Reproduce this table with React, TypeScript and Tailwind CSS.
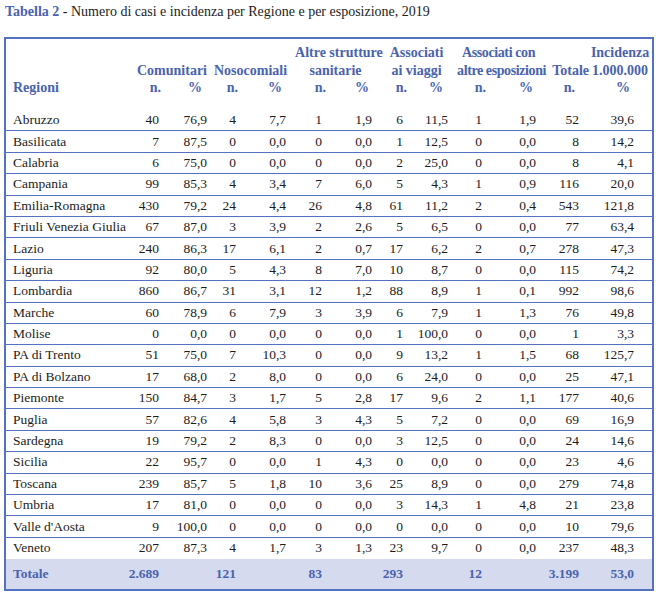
const rows: [string, ...string[]][] = [
  ["Abruzzo", "40", "76,9", "4", "7,7", "1", "1,9", "6", "11,5", "1", "1,9", "52", "39,6"],
  ["Basilicata", "7", "87,5", "0", "0,0", "0", "0,0", "1", "12,5", "0", "0,0", "8", "14,2"],
  ["Calabria", "6", "75,0", "0", "0,0", "0", "0,0", "2", "25,0", "0", "0,0", "8", "4,1"],
  ["Campania", "99", "85,3", "4", "3,4", "7", "6,0", "5", "4,3", "1", "0,9", "116", "20,0"],
  ["Emilia-Romagna", "430", "79,2", "24", "4,4", "26", "4,8", "61", "11,2", "2", "0,4", "543", "121,8"],
  ["Friuli Venezia Giulia", "67", "87,0", "3", "3,9", "2", "2,6", "5", "6,5", "0", "0,0", "77", "63,4"],
  ["Lazio", "240", "86,3", "17", "6,1", "2", "0,7", "17", "6,2", "2", "0,7", "278", "47,3"],
  ["Liguria", "92", "80,0", "5", "4,3", "8", "7,0", "10", "8,7", "0", "0,0", "115", "74,2"],
  ["Lombardia", "860", "86,7", "31", "3,1", "12", "1,2", "88", "8,9", "1", "0,1", "992", "98,6"],
  ["Marche", "60", "78,9", "6", "7,9", "3", "3,9", "6", "7,9", "1", "1,3", "76", "49,8"],
  ["Molise", "0", "0,0", "0", "0,0", "0", "0,0", "1", "100,0", "0", "0,0", "1", "3,3"],
  ["PA di Trento", "51", "75,0", "7", "10,3", "0", "0,0", "9", "13,2", "1", "1,5", "68", "125,7"],
  ["PA di Bolzano", "17", "68,0", "2", "8,0", "0", "0,0", "6", "24,0", "0", "0,0", "25", "47,1"],
  ["Piemonte", "150", "84,7", "3", "1,7", "5", "2,8", "17", "9,6", "2", "1,1", "177", "40,6"],
  ["Puglia", "57", "82,6", "4", "5,8", "3", "4,3", "5", "7,2", "0", "0,0", "69", "16,9"],
  ["Sardegna", "19", "79,2", "2", "8,3", "0", "0,0", "3", "12,5", "0", "0,0", "24", "14,6"],
  ["Sicilia", "22", "95,7", "0", "0,0", "1", "4,3", "0", "0,0", "0", "0,0", "23", "4,6"],
  ["Toscana", "239", "85,7", "5", "1,8", "10", "3,6", "25", "8,9", "0", "0,0", "279", "74,8"],
  ["Umbria", "17", "81,0", "0", "0,0", "0", "0,0", "3", "14,3", "1", "4,8", "21", "23,8"],
  ["Valle d'Aosta", "9", "100,0", "0", "0,0", "0", "0,0", "0", "0,0", "0", "0,0", "10", "79,6"],
  ["Veneto", "207", "87,3", "4", "1,7", "3", "1,3", "23", "9,7", "0", "0,0", "237", "48,3"],
];

const totals = ["2.689", "", "121", "", "83", "", "293", "", "12", "", "3.199", "53,0"];

// right padding of the data cells, one per numeric column
const dataPad = [
  "pr-[4px]", "pr-[4px]", "pr-[4px]", "pr-[4px]", "pr-[4px]", "pr-[4px]",
  "pr-[4px]", "pr-[4px]", "pr-[4px]", "pr-[4px]", "pr-[11px]", "pr-[18px]",
];

const subHeads: [string, string][] = [
  ["n.", "pr-[2px]"],
  ["%", "pr-[9px]"],
  ["n.", "pr-[2px]"],
  ["%", "pr-[8px]"],
  ["n.", "pr-0"],
  ["%", "pr-[7px]"],
  ["n.", "pr-0"],
  ["%", "pr-[9px]"],
  ["n.", "pr-0"],
  ["%", "pr-[7px]"],
  ["n.", "pr-[15px]"],
  ["%", "pr-[22px]"],
];

const widths = [
  "w-[121px]", "w-[36px]", "w-[48px]", "w-[29px]", "w-[50px]", "w-[36px]", "w-[50px]",
  "w-[31px]", "w-[45px]", "w-[34px]", "w-[54px]", "w-[50px]", "w-[62px]",
];

const serif = "font-['Liberation_Serif']";

export default function App() {
  return (
    <div className="w-[660px] h-[592px] bg-white font-['Liberation_Serif'] text-[#1c1c1c]">
      <div className="pl-[5px] pt-[3px] text-[14px] leading-[18px]">
        <span className="font-bold text-[#4a63ad]">Tabella 2</span> - Numero di casi e incidenza per Regione e
        per esposizione, 2019
      </div>

      <div className="ml-[4px] mt-[16px] w-[650px] border-2 border-[#5372c2]">
        <table className="table-fixed border-collapse w-[646px] font-['Liberation_Serif']">
          <colgroup>
            {widths.map((w, i) => (
              <col key={i} className={w} />
            ))}
          </colgroup>
          <thead className="text-[#4a63ad] text-[14px] leading-[17.5px]">
            <tr>
              <th rowSpan={2} className={`${serif} font-bold pl-[7px] text-left align-bottom pb-[13px]`}>
                Regioni
              </th>
              <th colSpan={2} className={`${serif} font-bold pt-[5px] align-bottom text-center pl-[6px]`}>
                Comunitari
              </th>
              <th colSpan={2} className={`${serif} font-bold pt-[5px] align-bottom text-center`}>
                Nosocomiali
              </th>
              <th colSpan={2} className={`${serif} font-bold pt-[5px] align-bottom text-center pl-[5px] whitespace-nowrap`}>
                Altre strutture
                <br />
                sanitarie
              </th>
              <th colSpan={2} className={`${serif} font-bold pt-[5px] align-bottom text-center pl-[5px]`}>
                Associati
                <br />
                ai viaggi
              </th>
              <th
                colSpan={2}
                className={`${serif} font-bold pt-[5px] align-bottom text-center pl-[5px] whitespace-nowrap tracking-[-0.4px]`}
              >
                Associati con
                <br />
                altre esposizioni
              </th>
              <th className={`${serif} font-bold pt-[5px] align-bottom text-right pr-[1px]`}>Totale</th>
              <th className={`${serif} font-bold pt-[5px] align-bottom text-center pr-[2px] whitespace-nowrap`}>
                Incidenza
                <br />
                1.000.000
              </th>
            </tr>
            <tr>
              {subHeads.map(([label, pad], i) => (
                <th key={i} className={`${serif} font-bold text-right pb-[13px] ${pad}`}>
                  {label}
                </th>
              ))}
            </tr>
          </thead>
          <tbody className="text-[13.5px]">
            {rows.map(([region, ...vals], r) => (
              <tr
                key={region}
                className={r < rows.length - 1 ? "border-b border-[#5372c2]" : ""}
              >
                <td className={`${serif} h-[21.4px] p-0 pl-[7px] leading-[20px] whitespace-nowrap`}>{region}</td>
                {vals.map((v, i) => (
                  <td key={i} className={`${serif} h-[21.4px] p-0 text-right leading-[20px] ${dataPad[i]}`}>
                    {v}
                  </td>
                ))}
              </tr>
            ))}
            <tr className="bg-[#d5daee] text-[#4a63ad]">
              <td className={`${serif} font-bold h-[30px] p-0 pl-[7px]`}>Totale</td>
              {totals.map((v, i) => (
                <td key={i} className={`${serif} font-bold h-[30px] p-0 text-right ${dataPad[i]}`}>
                  {v}
                </td>
              ))}
            </tr>
          </tbody>
        </table>
      </div>
    </div>
  );
}
